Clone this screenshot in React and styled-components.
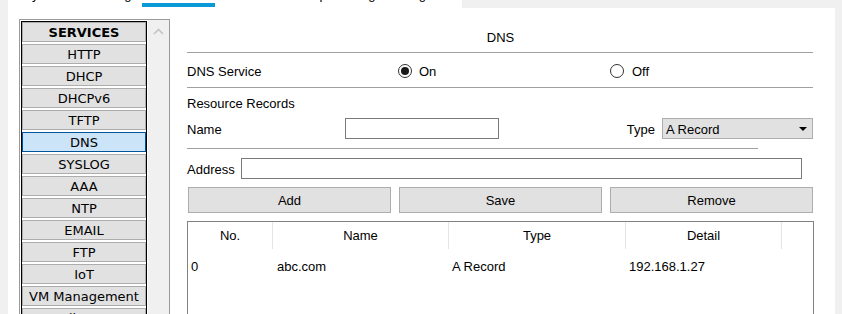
import React from 'react';
import styled, {createGlobalStyle} from 'styled-components';

const GlobalStyle = createGlobalStyle`
  html, body {
    margin: 0;
    padding: 0;
    overflow: hidden;
    background: #f0f0f0;
  }
  body {
    font-family: "Liberation Sans", Arial, sans-serif;
    font-size: 13px;
    color: #000;
  }
`;

const Screen = styled.div`
  width: 842px;
  height: 314px;
  overflow: hidden;
  display: flex;
  flex-direction: column;
`;

const TabStrip = styled.div`
  margin-left: 8px;
  width: 454px;
  height: 8px;
  flex: none;
  background: #fff;
  display: flex;
  overflow: hidden;
`;

const Tab = styled.div`
  flex: none;
  width: ${p => p.$w}px;
  padding-left: ${p => p.$pad}px;
  box-sizing: border-box;
  height: 8px;
  white-space: nowrap;
  &::after {
    content: '';
    display: ${p => p.$active ? 'block' : 'none'};
    margin-left: -${p => p.$pad}px;
    height: 4px;
    background: #0a9bd6;
  }
`;

const TabText = styled.div`
  margin-top: -12px;
  height: 15px;
  line-height: 13px;
`;

const Panel = styled.div`
  margin-left: 8px;
  width: 827px;
  height: 306px;
  flex: none;
  background: #fff;
  display: flex;
  align-items: flex-start;
  padding: 11px 0 0 11px;
  box-sizing: border-box;
  overflow: hidden;
`;

const ListBox = styled.div`
  flex: none;
  width: 151px;
  height: 320px;
  box-sizing: border-box;
  border: 1px solid #9a9a9a;
  padding: 1px 0 0 1px;
  display: flex;
  gap: 1px;
  background: #fff;
`;

const ListItems = styled.div`
  width: 126px;
  box-sizing: border-box;
  border: 1px solid #000;
  border-bottom: none;
  display: flex;
  flex-direction: column;
  gap: 2px;
`;

const ListItem = styled.div`
  height: 20px;
  flex: none;
  box-sizing: border-box;
  border: 1px solid ${p => p.$selected ? '#005499' : '#adadad'};
  background: ${p => p.$selected ? '#cce4f7' : '#e1e1e1'};
  font-family: "DejaVu Sans", Verdana, sans-serif;
  font-size: 13px;
  font-weight: ${p => p.$bold ? 'bold' : 'normal'};
  line-height: 18px;
  padding-top: 1px;
  text-align: center;
  white-space: nowrap;
  overflow: hidden;
`;

const ScrollTrack = styled.div`
  width: 21px;
  margin-top: -1px;
  background: #f0f0f0;
  display: flex;
  justify-content: center;
  padding-top: 8px;
  box-sizing: border-box;
`;

const Content = styled.div`
  margin-left: 17px;
  width: 627px;
  flex: none;
  display: flex;
  flex-direction: column;
`;

const Title = styled.div`
  height: 33px;
  box-sizing: border-box;
  padding-bottom: 6px;
  display: flex;
  align-items: flex-end;
  justify-content: center;
  line-height: 16px;
`;

const Divider = styled.div`
  height: 1px;
  width: ${p => p.$w || 626}px;
  margin-top: ${p => p.$top || 0}px;
  background: #a0a0a0;
`;

const ServiceRow = styled.div`
  height: 34px;
  box-sizing: border-box;
  padding-top: 2px;
  display: grid;
  grid-template-columns: 211px 212px 1fr;
  align-items: center;
`;

const RadioLabel = styled.label`
  display: flex;
  align-items: center;
  gap: ${p => p.$gap}px;
`;

const RadioCircle = styled.span`
  width: 14px;
  height: 14px;
  box-sizing: border-box;
  border: 1px solid #333;
  border-radius: 50%;
  display: flex;
  align-items: center;
  justify-content: center;
  background: #fff;
  &::after {
    content: '';
    display: ${p => p.$checked ? 'block' : 'none'};
    width: 8px;
    height: 8px;
    border-radius: 50%;
    background: #1a1a1a;
  }
`;

const SectionLabel = styled.div`
  padding-top: 8px;
  line-height: 16px;
`;

const FieldRow = styled.div`
  margin-top: ${p => p.$top}px;
  height: 21px;
  display: flex;
  align-items: center;
`;

const FieldLabel = styled.span`
  width: ${p => p.$w ? `${p.$w}px` : 'auto'};
  flex: none;
  padding-top: 1px;
`;

const TextBox = styled.div`
  width: ${p => p.$w}px;
  height: 21px;
  margin-left: ${p => p.$left || 0}px;
  box-sizing: border-box;
  border: 1px solid #7a7a7a;
  background: #fff;
`;

const Spacer = styled.div`
  flex: 1;
`;

const Select = styled.div`
  width: 151px;
  height: 21px;
  margin-left: 7px;
  margin-right: 1px;
  box-sizing: border-box;
  border: 1px solid #adadad;
  background: #e1e1e1;
  display: flex;
  align-items: center;
  padding: 1px 5px 0 3px;
`;

const Arrow = styled.span`
  margin-left: auto;
  width: 0;
  height: 0;
  border-left: 4px solid transparent;
  border-right: 4px solid transparent;
  border-top: 4px solid #000;
`;

const ButtonRow = styled.div`
  margin-top: 8px;
  padding-left: 1px;
  display: grid;
  grid-template-columns: repeat(3, 203px);
  gap: 8px;
`;

const Button = styled.button`
  height: 26px;
  box-sizing: border-box;
  border: 1px solid #adadad;
  background: #e1e1e1;
  font-family: "Liberation Sans", Arial, sans-serif;
  font-size: 13px;
  color: #000;
  padding: 0;
`;

const Table = styled.div`
  margin-top: 8px;
  width: 627px;
  height: 130px;
  box-sizing: border-box;
  border: 1px solid #828282;
`;

const columns = '85px 176px 177px 156px 1fr';

const HeaderRow = styled.div`
  display: grid;
  grid-template-columns: ${columns};
  height: 27px;
`;

const HeaderCell = styled.div`
  border-right: ${p => p.$last ? 'none' : '1px solid #e5e5e5'};
  display: flex;
  align-items: center;
  justify-content: center;
`;

const DataRow = styled.div`
  display: grid;
  grid-template-columns: ${columns};
  padding-top: 9px;
  line-height: 18px;
`;

const DataCell = styled.div`
  padding-left: ${p => p.$pad || 3}px;
  white-space: nowrap;
`;

const tabs = [
    {label: 'Physical', w: 70, pad: 8},
    {label: 'Config', w: 64, pad: 16},
    {label: 'Services', w: 73, pad: 10, active: true},
    {label: 'Desktop', w: 130, pad: 64},
    {label: 'Programming', w: 117, pad: 3}
];

const services = ['HTTP', 'DHCP', 'DHCPv6', 'TFTP', 'DNS', 'SYSLOG', 'AAA', 'NTP', 'EMAIL', 'FTP', 'IoT', 'VM Management', 'Radius EAP'];

const records = [{no: '0', name: 'abc.com', type: 'A Record', detail: '192.168.1.27'}];

const Chevron = () =>
    <svg width="11" height="7" viewBox="0 0 11 7">
        <polyline points="1,6 5.5,1.5 10,6" fill="none" stroke="#c4c4c4" strokeWidth="1.6"/>
    </svg>;

export default function App() {
    return <Screen>
        <GlobalStyle/>
        <TabStrip>
            {tabs.map(t =>
                <Tab key={t.label} $w={t.w} $pad={t.pad} $active={t.active}>
                    <TabText>{t.label}</TabText>
                </Tab>
            )}
        </TabStrip>
        <Panel>
            <ListBox>
                <ListItems>
                    <ListItem $bold>SERVICES</ListItem>
                    {services.map(s =>
                        <ListItem key={s} $selected={s === 'DNS'}>{s}</ListItem>
                    )}
                </ListItems>
                <ScrollTrack>
                    <Chevron/>
                </ScrollTrack>
            </ListBox>
            <Content>
                <Title>DNS</Title>
                <Divider/>
                <ServiceRow>
                    <span>DNS Service</span>
                    <RadioLabel $gap={7}><RadioCircle $checked/>On</RadioLabel>
                    <RadioLabel $gap={8}><RadioCircle/>Off</RadioLabel>
                </ServiceRow>
                <Divider/>
                <SectionLabel>Resource Records</SectionLabel>
                <FieldRow $top={6}>
                    <FieldLabel $w={158}>Name</FieldLabel>
                    <TextBox $w={154}/>
                    <Spacer/>
                    <FieldLabel>Type</FieldLabel>
                    <Select>A Record<Arrow/></Select>
                </FieldRow>
                <Divider $w={571} $top={9}/>
                <FieldRow $top={9}>
                    <FieldLabel>Address</FieldLabel>
                    <TextBox $w={561} $left={6}/>
                </FieldRow>
                <ButtonRow>
                    <Button>Add</Button>
                    <Button>Save</Button>
                    <Button>Remove</Button>
                </ButtonRow>
                <Table>
                    <HeaderRow>
                        <HeaderCell>No.</HeaderCell>
                        <HeaderCell>Name</HeaderCell>
                        <HeaderCell>Type</HeaderCell>
                        <HeaderCell>Detail</HeaderCell>
                        <HeaderCell $last/>
                    </HeaderRow>
                    {records.map(r =>
                        <DataRow key={r.no}>
                            <DataCell>{r.no}</DataCell>
                            <DataCell $pad={4}>{r.name}</DataCell>
                            <DataCell>{r.type}</DataCell>
                            <DataCell>{r.detail}</DataCell>
                            <DataCell/>
                        </DataRow>
                    )}
                </Table>
            </Content>
        </Panel>
    </Screen>;
}
